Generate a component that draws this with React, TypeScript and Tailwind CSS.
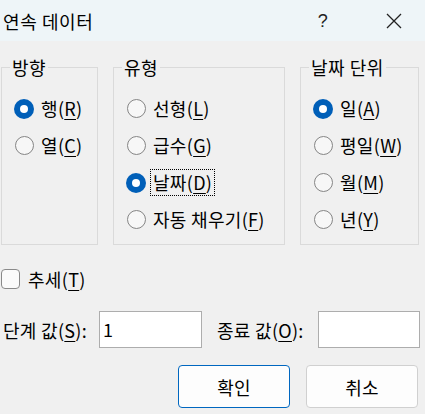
import React from "react";

const font = { fontFamily: '"Noto Sans CJK KR", "Noto Sans", sans-serif' };

function Radio({ checked }: { checked?: boolean }) {
  if (checked) {
    return (
      <span className="flex h-[20px] w-[20px] shrink-0 items-center justify-center rounded-full bg-[#005fb8]">
        <span className="h-[8px] w-[8px] rounded-full bg-white" />
      </span>
    );
  }
  return (
    <span className="flex h-[20px] w-[20px] shrink-0 items-center justify-center">
      <span className="h-[19px] w-[19px] rounded-full border border-[#858585] bg-[#f7f7f7]" />
    </span>
  );
}

function Mn({ c }: { c: string }) {
  return (
    <>
      (<span className="underline decoration-1 underline-offset-[3px]">{c}</span>)
    </>
  );
}

function RadioRow({
  label,
  m,
  checked,
  focus,
}: {
  label: string;
  m: string;
  checked?: boolean;
  focus?: boolean;
}) {
  return (
    <div className="flex h-[37px] items-center gap-[4px]">
      <Radio checked={checked} />
      <span
        className={
          "whitespace-nowrap border px-[2px] py-[1px] leading-[23px] " +
          (focus ? "border-dotted border-black" : "border-transparent")
        }
      >
        {label}
        <Mn c={m} />
      </span>
    </div>
  );
}

function Group({
  title,
  className,
  children,
}: {
  title: string;
  className: string;
  children: React.ReactNode;
}) {
  return (
    <div className={"relative mt-[10px] border border-[#dadada] pb-[6px] pl-[12px] pt-[22px] " + className}>
      <span className="absolute left-[8px] top-[-12px] bg-[#f0f0f0] px-[2px] leading-[22px] tracking-[0.5px]">
        {title}
      </span>
      {children}
    </div>
  );
}

export default function App() {
  return (
    <div
      className="h-[414px] w-[425px] overflow-hidden bg-[#f0f0f0] text-[18px] tracking-[0.3px] text-black"
      style={font}
    >
      <div className="flex h-[41px] items-center bg-[#eef5f8] pl-[3px]">
        <span className="leading-[24px] tracking-[0.6px]">연속 데이터</span>
        <span
          className="ml-auto mr-[58px] text-[18px] leading-[24px] text-[#222]"
          style={{ fontFamily: '"Liberation Sans", sans-serif' }}
        >
          ?
        </span>
        <svg width="16" height="16" viewBox="0 0 16 16" className="mr-[23px]">
          <path d="M1 1 L15 15 M15 1 L1 15" stroke="#222" strokeWidth="1.3" />
        </svg>
      </div>

      <div className="flex flex-col pl-[1px] pr-[5px] pt-[16px]">
        <div className="flex h-[188px] gap-[15px]">
          <Group title="방향" className="w-[97px]">
            <RadioRow label="행" m="R" checked />
            <RadioRow label="열" m="C" />
          </Group>
          <Group title="유형" className="w-[172px]">
            <RadioRow label="선형" m="L" />
            <RadioRow label="급수" m="G" />
            <RadioRow label="날짜" m="D" checked focus />
            <RadioRow label="자동 채우기" m="F" />
          </Group>
          <Group title="날짜 단위" className="w-[119px]">
            <RadioRow label="일" m="A" checked />
            <RadioRow label="평일" m="W" />
            <RadioRow label="월" m="M" />
            <RadioRow label="년" m="Y" />
          </Group>
        </div>

        <div className="mt-[24px] flex h-[20px] items-center gap-[8px]">
          <span className="h-[20px] w-[19px] rounded-[4px] border border-[#8a8a8a] bg-[#fbfbfb]" />
          <span className="leading-[20px]">
            추세
            <Mn c="T" />
          </span>
        </div>

        <div className="mt-[22px] flex h-[37px] items-center">
          <span className="w-[98px] shrink-0 whitespace-nowrap pl-[2px] leading-[24px]">
            단계 값<Mn c="S" />:
          </span>
          <div className="flex h-[37px] w-[103px] shrink-0 items-center border border-[#adadad] bg-white pb-[2px] pl-[3px] leading-[20px]">
            1
          </div>
          <span className="ml-[15px] w-[101px] shrink-0 whitespace-nowrap leading-[24px]">
            종료 값<Mn c="O" />:
          </span>
          <div className="h-[37px] w-[102px] shrink-0 border border-[#adadad] bg-white" />
        </div>

        <div className="mt-[17px] flex justify-end gap-[16px] pr-[2px]">
          <button className="h-[43px] w-[112px] rounded-[4px] border-[1.5px] border-[#0067c0] bg-[#fdfdfd] leading-[24px]">
            확인
          </button>
          <button className="h-[43px] w-[112px] rounded-[4px] border border-[#d0d0d0] bg-[#fdfdfd] leading-[24px]">
            취소
          </button>
        </div>
      </div>
    </div>
  );
}
